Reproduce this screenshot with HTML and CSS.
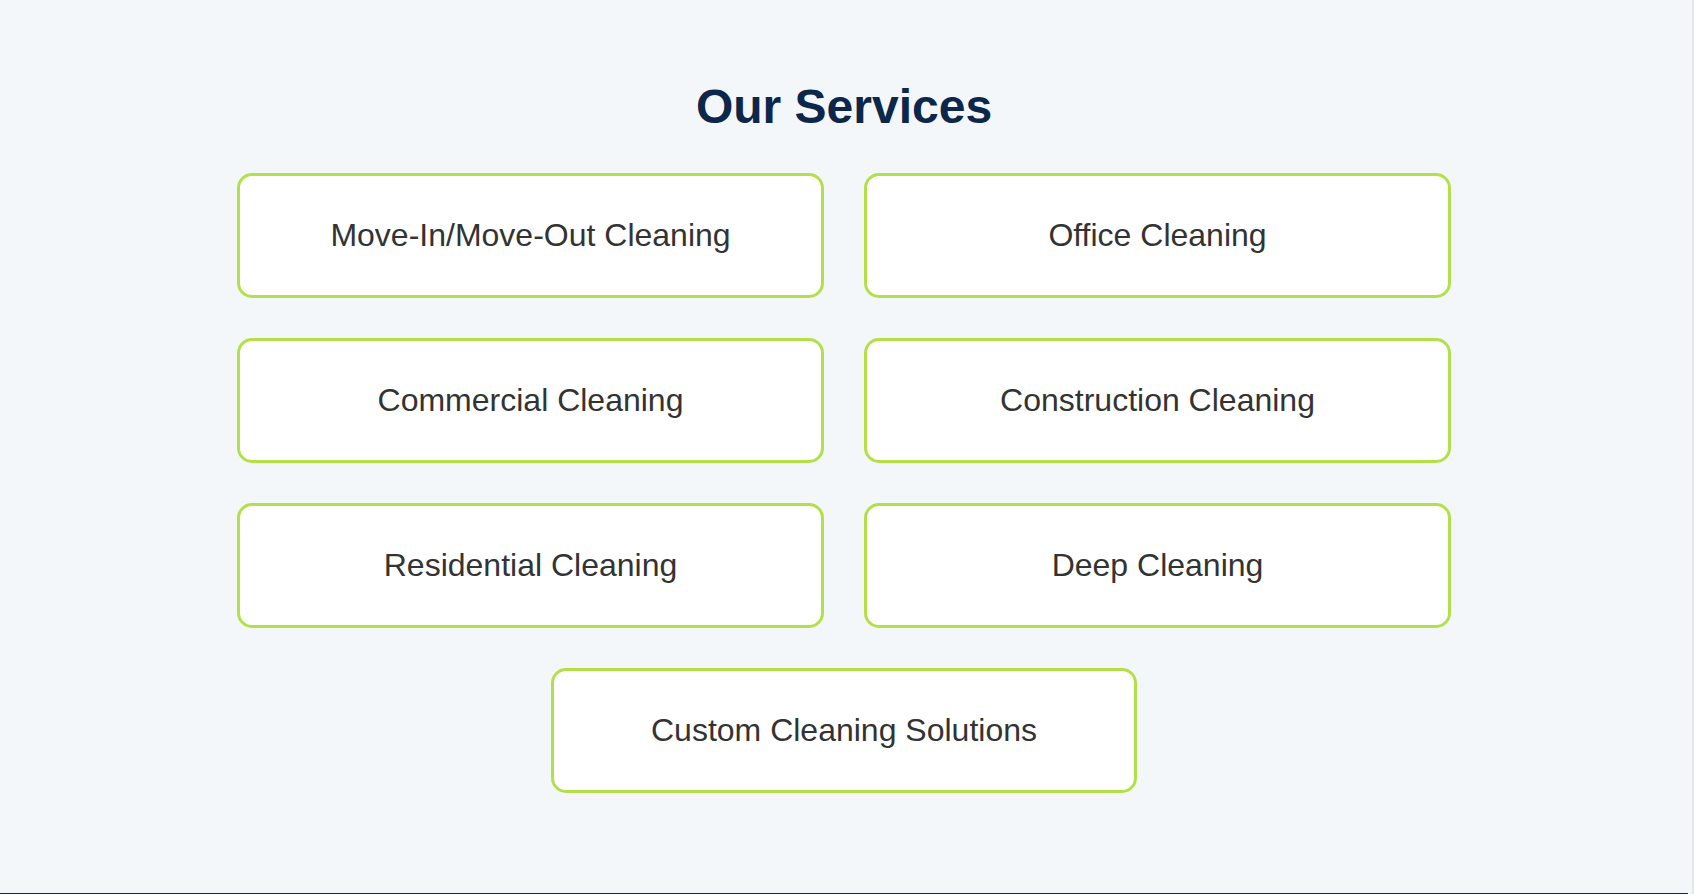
FILE: index.html
```html
<!DOCTYPE html>
<html lang="en">
<head>
<meta charset="utf-8">
<title>Our Services</title>
<link rel="stylesheet" href="styles.css">
</head>
<body>
<div class="page">
  <section class="services">
    <h2 class="services-title">Our Services</h2>
    <div class="services-grid">
      <div class="service-card">Move-In/Move-Out Cleaning</div>
      <div class="service-card">Office Cleaning</div>
      <div class="service-card">Commercial Cleaning</div>
      <div class="service-card">Construction Cleaning</div>
      <div class="service-card">Residential Cleaning</div>
      <div class="service-card">Deep Cleaning</div>
      <div class="service-card service-card--last">Custom Cleaning Solutions</div>
    </div>
  </section>
  <footer class="footer"></footer>
</div>
<div class="scroll-edge"></div>
</body>
</html>
```

FILE: styles.css
```css
html, body {
  margin: 0;
  padding: 0;
  background: #f3f7fa;
  overflow: hidden;
  height: 100%;
}

body {
  font-family: "Liberation Sans", Arial, Helvetica, sans-serif;
}

.page {
  padding-right: 6px;
}

.services {
  padding: 79px 0 100px;
  display: flex;
  flex-direction: column;
  align-items: center;
}

.services-title {
  margin: 0 0 38px;
  font-size: 48px;
  line-height: 56px;
  font-weight: 700;
  color: #0c2749;
  text-align: center;
}

.services-grid {
  width: 1214px;
  display: grid;
  grid-template-columns: 587px 587px;
  column-gap: 40px;
  row-gap: 40px;
}

.service-card {
  background: #ffffff;
  border: 3px solid #b3e049;
  border-radius: 15px;
  padding: 41px 20px;
  font-size: 32px;
  line-height: 37px;
  color: #333333;
  text-align: center;
}

.service-card--last {
  grid-column: 1 / span 2;
  justify-self: center;
  width: 586px;
  box-sizing: border-box;
}

.footer {
  height: 40px;
  background: #0c2749;
}

.scroll-edge {
  position: fixed;
  top: 0;
  right: 0;
  width: 2px;
  height: 100%;
  background: #e4e6e8;
}
```
